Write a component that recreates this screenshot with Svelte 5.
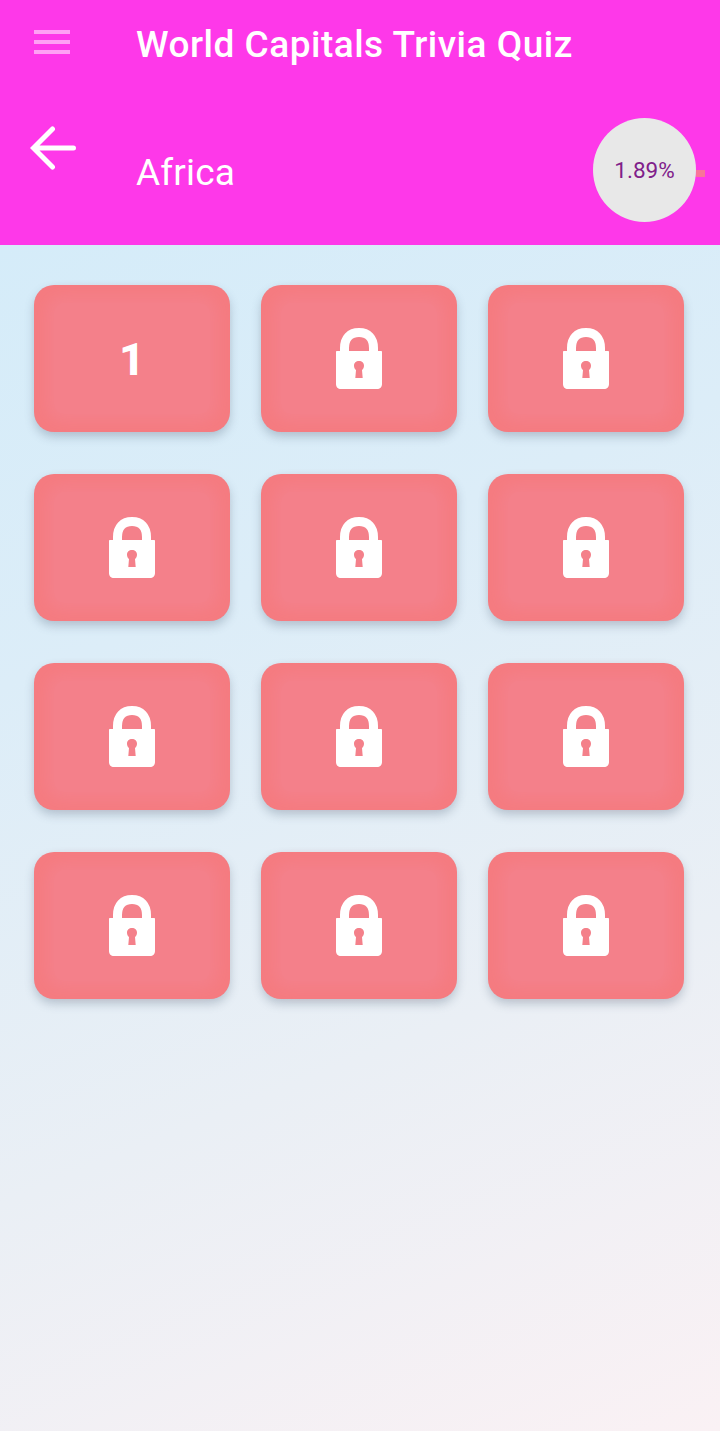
<script lang="ts">
	const levels = Array.from({ length: 12 }, (_, i) => ({ num: i + 1, locked: i > 0 }));
</script>

<div class="page">
	<header class="header">
		<div class="toolbar">
			<svg class="menu" width="36" height="24" viewBox="0 0 36 24" aria-hidden="true">
				<path d="M0 2H36M0 12H36M0 22H36" stroke="#ffa0f5" stroke-width="4" />
			</svg>
			<h1 class="title">World Capitals Trivia Quiz</h1>
		</div>
		<div class="subbar">
			<svg class="back" width="46" height="44" viewBox="0 0 46 44" aria-hidden="true">
				<path d="M43.500 22H4M22.500 3L3.500 22L22.500 41" fill="none" stroke="#fff" stroke-width="5" stroke-linecap="round" />
			</svg>
			<span class="region">Africa</span>
			<div class="progress">
				<div class="circle">1.89%</div>
				<span class="tick"></span>
			</div>
		</div>
	</header>

	<main class="grid">
		{#each levels as level (level.num)}
			<button class="card">
				<span class="inner">
					{#if level.locked}
						<svg class="lock" width="46" height="61" viewBox="0 0 46 61" aria-hidden="true">
							<path d="M8.500 26V20C8.500 10 14 4.500 23 4.500C32 4.500 37.500 10 37.500 20V26" fill="none" stroke="#fff" stroke-width="9" />
							<path fill-rule="evenodd" fill="#fff" d="M1 23H45C45.600 23 46 23.400 46 24V56C46 59 44 61 41 61H5C2 61 0 59 0 56V24C0 23.400 .4 23 1 23ZM23 33C20 33 18 35 18 37.800C18 39.600 18.800 41 20 42L19.300 50H26.700L26 42C27.200 41 28 39.600 28 37.800C28 35 26 33 23 33Z" />
						</svg>
					{:else}
						<span class="num">{level.num}</span>
					{/if}
				</span>
			</button>
		{/each}
	</main>
</div>

<style>
	:global(body) {
		margin: 0;
	}

	.page {
		display: flex;
		flex-direction: column;
		width: 720px;
		height: 1431px;
		overflow: hidden;
		font-family: Roboto, "Liberation Sans", sans-serif;
	}

	.header {
		height: 245px;
		flex-shrink: 0;
		background: #fe38e9;
		color: #fff;
	}

	.toolbar {
		display: flex;
		align-items: center;
		height: 88px;
		padding-left: 34px;
	}

	.menu {
		margin-right: 66px;
		margin-bottom: 4px;
	}

	.title {
		margin: 2px 0 0;
		font-size: 37px;
		font-weight: 500;
		letter-spacing: 0.5px;
		line-height: 44px;
		color: #fff;
	}

	.subbar {
		display: flex;
		align-items: flex-start;
		padding-left: 30px;
	}

	.back {
		margin-top: 38px;
		margin-right: 60px;
	}

	.region {
		margin-top: 63px;
		font-size: 37px;
		letter-spacing: 0.15px;
		line-height: 44px;
	}

	.progress {
		display: flex;
		align-items: center;
		margin-left: auto;
		margin-top: 30px;
		margin-right: 15px;
	}

	.circle {
		display: flex;
		align-items: center;
		justify-content: center;
		width: 103px;
		height: 104px;
		border-radius: 50%;
		background: #e8e8e8;
		color: #80208a;
		font-size: 22.5px;
	}

	.tick {
		width: 9px;
		height: 7px;
		margin-top: 7px;
		background: #f9749a;
	}

	.grid {
		flex: 1;
		display: grid;
		grid-template-columns: repeat(3, 196px);
		grid-auto-rows: 147.5px;
		align-content: start;
		column-gap: 31px;
		row-gap: 41.5px;
		padding: 39.5px 34px 0;
		background: linear-gradient(158deg, #d5ecf9 0%, #dcedf8 30%, #eaeff5 65%, #faf1f4 100%);
	}

	.card {
		display: flex;
		padding: 0;
		border: none;
		border-radius: 20px;
		background: #f57b80;
		box-shadow: 0 5px 10px rgba(90, 110, 130, 0.32);
		font-family: inherit;
	}

	.inner {
		flex: 1;
		display: flex;
		align-items: center;
		justify-content: center;
		margin: 18px 20px;
		background: #f4808a;
		box-shadow: 0 0 14px 8px #f4808a;
		border-radius: 10px;
	}

	.lock {
		margin-top: 1px;
	}

	.num {
		padding-top: 2px;
		font-size: 45px;
		font-weight: 800;
		line-height: 1;
		color: #fff;
	}
</style>
